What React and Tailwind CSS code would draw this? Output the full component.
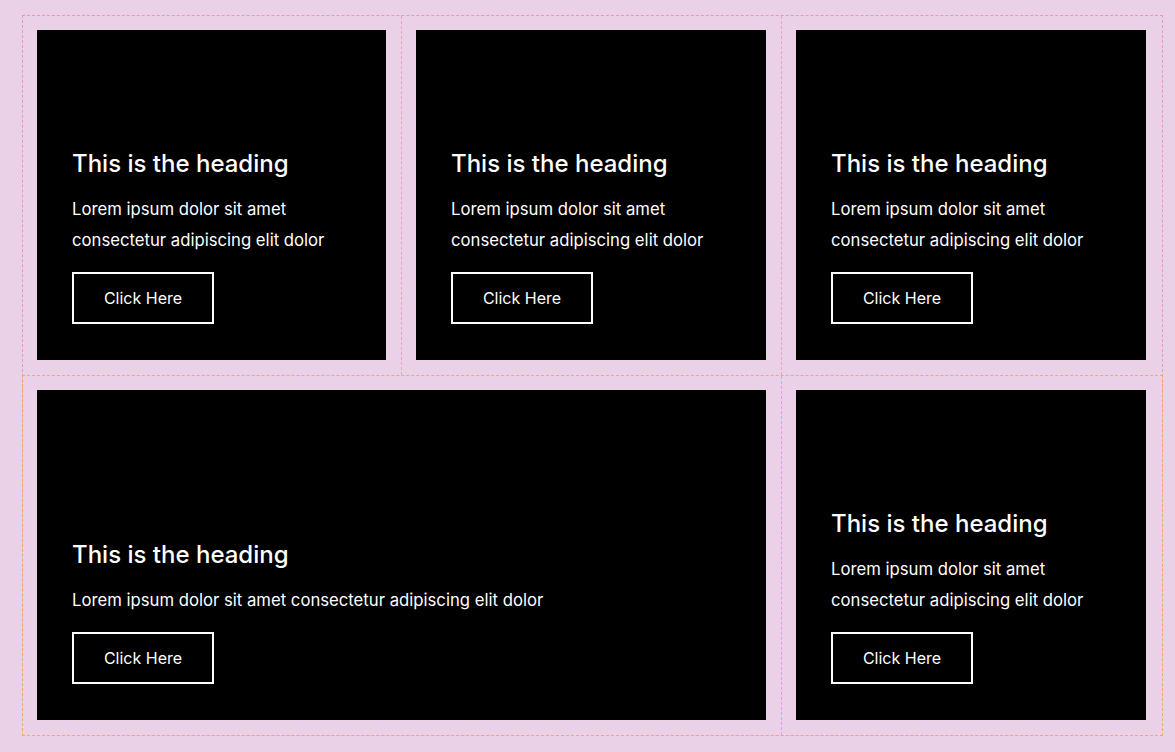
import React from 'react';

const twoLines = ['Lorem ipsum dolor sit amet', 'consectetur adipiscing elit dolor'];

function Card({ lines }) {
  return (
    <div className="bg-black h-[330px] flex flex-col justify-end pl-[35px] pr-[20px] pb-[36px]">
      <h2 className="font-['Inter',sans-serif] font-[550] text-[24px] leading-[29px] text-white">
        This is the heading
      </h2>
      <div className="mt-[16px] font-['Inter',sans-serif] text-[16.7px] leading-[31px] text-white">
        {lines.map((l) => (
          <p key={l}>{l}</p>
        ))}
      </div>
      <button className="mt-[16px] w-[142px] h-[52px] border-2 border-white text-white text-[16px] font-['Inter',sans-serif]">
        Click Here
      </button>
    </div>
  );
}

export default function App() {
  return (
    <div className="min-h-[752px] bg-[#ead1e8] pt-[15px] pl-[22px]">
      <div className="w-[1141px] border border-dashed border-[#e79aae]">
        {/* Top row: three columns */}
        <div className="grid grid-cols-[379px_380px_380px]">
          <div className="pt-[14px] pb-[15px] pl-[14px] pr-[15px] border-r border-dashed border-[#e3a6bb]">
            <Card lines={twoLines} />
          </div>
          <div className="pt-[14px] pb-[15px] pl-[14px] pr-[15px] border-r border-dashed border-[#e3a6bb]">
            <Card lines={twoLines} />
          </div>
          <div className="pt-[14px] pb-[15px] pl-[14px] pr-[16px]">
            <Card lines={twoLines} />
          </div>
        </div>

        {/* Bottom row: wide card + narrow card */}
        <div className="-mx-[1px] -mb-[1px] grid grid-cols-[759px_1fr] border border-dashed border-[#eda874]">
          <div className="pt-[14px] pb-[15px] pl-[14px] pr-[15px] border-r border-dashed border-[#eda874]">
            <Card lines={['Lorem ipsum dolor sit amet consectetur adipiscing elit dolor']} />
          </div>
          <div className="pt-[14px] pb-[15px] pl-[14px] pr-[16px]">
            <Card lines={twoLines} />
          </div>
        </div>
      </div>
    </div>
  );
}
